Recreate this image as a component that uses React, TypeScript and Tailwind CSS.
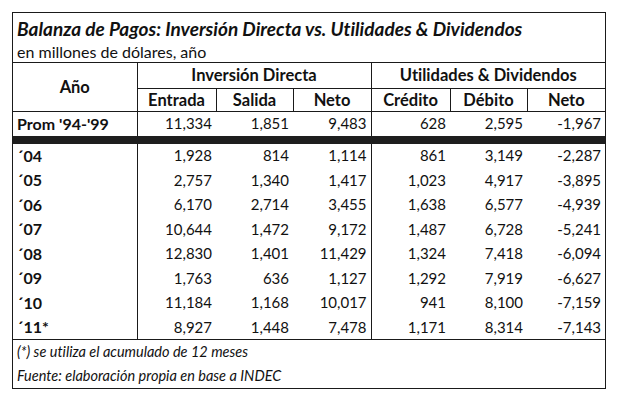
import React from 'react';

type Row = { year: string; vals: string[] };

const rows: Row[] = [
  { year: '´04', vals: ['1,928', '814', '1,114', '861', '3,149', '-2,287'] },
  { year: '´05', vals: ['2,757', '1,340', '1,417', '1,023', '4,917', '-3,895'] },
  { year: '´06', vals: ['6,170', '2,714', '3,455', '1,638', '6,577', '-4,939'] },
  { year: '´07', vals: ['10,644', '1,472', '9,172', '1,487', '6,728', '-5,241'] },
  { year: '´08', vals: ['12,830', '1,401', '11,429', '1,324', '7,418', '-6,094'] },
  { year: '´09', vals: ['1,763', '636', '1,127', '1,292', '7,919', '-6,627'] },
  { year: '´10', vals: ['11,184', '1,168', '10,017', '941', '8,100', '-7,159'] },
  { year: '´11*', vals: ['8,927', '1,448', '7,478', '1,171', '8,314', '-7,143'] },
];

const prom = ['11,334', '1,851', '9,483', '628', '2,595', '-1,967'];

export default function App() {
  return (
    <div className="w-[619px] h-[400px] bg-white pt-[12px] pl-[12px] font-['Lato',sans-serif] [font-variant-ligatures:none] text-[#111]">
      <div className="w-[594px] border border-[#1a1a1a]">
        <div className="h-[29px] flex items-end pl-[4px] pb-[4px] text-[19px] font-bold italic leading-none">
          Balanza de Pagos: Inversión Directa vs. Utilidades &amp; Dividendos
        </div>
        <div className="h-[20px] flex items-center pl-[4px] text-[16px] leading-none">
          en millones de dólares, año
        </div>
        <table className="w-full table-fixed border-collapse text-[15px] leading-none">
          <colgroup>
            <col className="w-[124px]" />
            <col className="w-[79px]" />
            <col className="w-[77px]" />
            <col className="w-[78px]" />
            <col className="w-[79px]" />
            <col className="w-[77px]" />
            <col className="w-[78px]" />
          </colgroup>
          <thead className="text-[16.5px]">
            <tr className="h-[26px] border-t border-[#1a1a1a]">
              <th rowSpan={2} className="border-r border-b border-[#1a1a1a] font-bold">Año</th>
              <th colSpan={3} className="border-r border-b border-[#1a1a1a] font-bold">Inversión Directa</th>
              <th colSpan={3} className="border-b border-[#1a1a1a] font-bold">Utilidades &amp; Dividendos</th>
            </tr>
            <tr className="h-[23px]">
              <th className="border-r border-[#1a1a1a] font-bold">Entrada</th>
              <th className="border-r border-[#1a1a1a] font-bold">Salida</th>
              <th className="border-r border-[#1a1a1a] font-bold">Neto</th>
              <th className="border-r border-[#1a1a1a] font-bold">Crédito</th>
              <th className="border-r border-[#1a1a1a] font-bold">Débito</th>
              <th className="font-bold">Neto</th>
            </tr>
          </thead>
          <tbody>
            <tr className="h-[24px] border-t border-[#1a1a1a]">
              <td className="pl-[4px] font-bold text-[16px] border-r border-[#1a1a1a]">Prom '94-'99</td>
              {prom.map((v, i) => (
                <td
                  key={i}
                  className={i === 2 ? 'text-right pr-[4px] border-r border-[#1a1a1a]' : 'text-right pr-[4px]'}
                >
                  {v}
                </td>
              ))}
            </tr>
            <tr className="h-[8px]">
              <td colSpan={7} className="bg-[#1e1e1e] p-0"></td>
            </tr>
            {rows.map(r => (
              <tr key={r.year} className="h-[24.5px]">
                <td className="pl-[4px] font-bold text-[16px] border-r border-[#1a1a1a]">{r.year}</td>
                {r.vals.map((v, i) => (
                  <td
                    key={i}
                    className={i === 2 ? 'text-right pr-[4px] border-r border-[#1a1a1a]' : 'text-right pr-[4px]'}
                  >
                    {v}
                  </td>
                ))}
              </tr>
            ))}
            <tr className="h-[25px] border-t border-[#1a1a1a]">
              <td colSpan={7} className="pl-[4px] italic text-[14.5px]">(*) se utiliza el acumulado de 12 meses</td>
            </tr>
            <tr className="h-[23px]">
              <td colSpan={7} className="pl-[4px] italic text-[14.5px]">Fuente: elaboración propia en base a INDEC</td>
            </tr>
          </tbody>
        </table>
      </div>
    </div>
  );
}
